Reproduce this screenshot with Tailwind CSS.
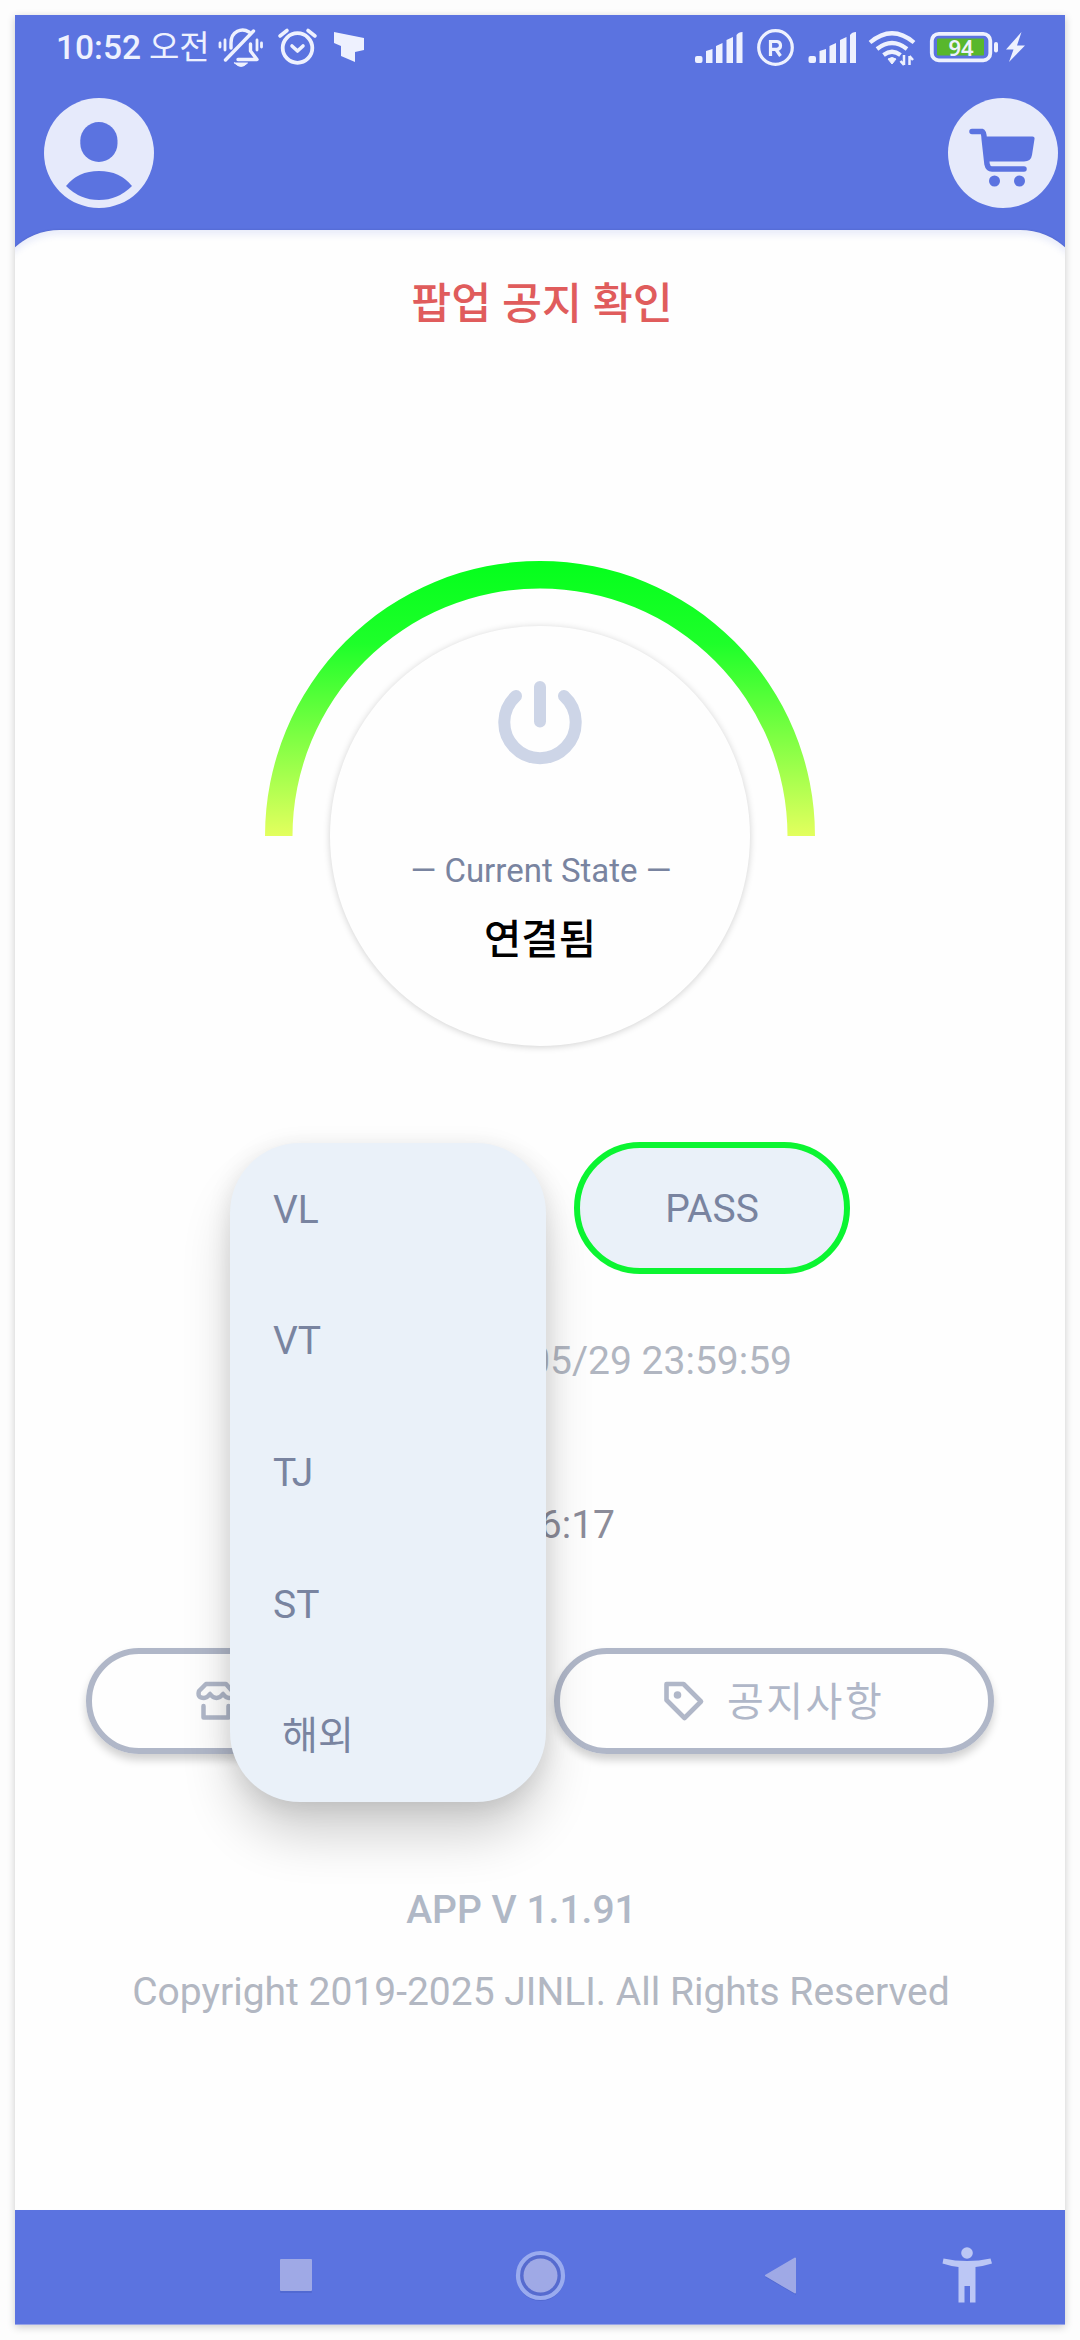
<!DOCTYPE html>
<html lang="ko">
<head>
<meta charset="utf-8">
<title>JINLI</title>
<script src="https://cdn.jsdelivr.net/npm/@tailwindcss/browser@4"></script>
</head>
<body class="bg-[#fdfdfd] w-[1080px] h-[2340px] overflow-hidden p-[15px] font-['Roboto','Noto_Sans_CJK_KR',sans-serif]">
<div class="relative w-[1050px] h-[2310px] flex flex-col bg-[#5b73e0] overflow-hidden shadow-[0_2px_8px_rgba(0,0,0,0.2)]">
  <!-- status bar -->
  <div class="h-[65px] shrink-0 flex items-center text-[#eef1fe]">
    <div class="w-[193px] ml-[41px] flex items-baseline whitespace-nowrap leading-none">
      <span class="text-[33.5px] font-medium w-[93px]">10:52</span>
      <span class="text-[33px]">오전</span>
    </div>
    <svg class="ml-[-32px] shrink-0" width="164" height="48" viewBox="216 24 164 48" fill="none" stroke="#eef1fe" stroke-width="3.4" stroke-linecap="round" stroke-linejoin="round">
      <path d="M230 48V43C230 31 241 27.500 248 32M249.500 44V51L256 59.500H237M224.500 60L252.500 31"/>
      <path d="M233.500 63H246.500Q240 70 233.500 63Z" fill="#eef1fe" stroke-width="1"/>
      <path d="M219 43V47M224 40V50M256 40V50M260.500 43V47" stroke-width="2.800"/>
      <circle cx="296.500" cy="48" r="14.800" stroke-width="3.800"/>
      <path d="M291 46L296.500 51L302 46M279 36L286 30.500M314 36L307 30.500" stroke-width="3.600"/>
      <path d="M333 32L363 38V50L354 52V62L340 56V46L333 43Z" fill="#eef1fe" stroke="none"/>
    </svg>
    <svg class="ml-auto mr-[37px] shrink-0" width="336" height="48" viewBox="692 24 336 48" fill="#eef1fe">
      <g id="bars"><rect x="695" y="56" width="7.500" height="7" rx="2"/><path d="M706 51l6.500-2v14h-6.500zM716 46l6.500-3v20h-6.500zM726.500 40l6.500-3v26h-6.500zM736.500 35q2-3 6-3v31h-6z"/></g>
      <circle cx="775.500" cy="47.500" r="16.800" fill="none" stroke="#eef1fe" stroke-width="3.200"/>
      <path d="M770.500 56V41.500H777Q780.500 42 780.500 45.500Q780.500 49 777 49.300H770.500M776 49.500L780.500 56" fill="none" stroke="#eef1fe" stroke-width="3.200"/>
      <use href="#bars" x="113.500"/>
      <g fill="none" stroke="#eef1fe" stroke-width="4.200">
        <path d="M870 42.500Q892 24 914 42.500"/><path d="M877 49Q892 37 907 49"/><path d="M883.500 55Q892 48.500 900.500 55"/>
      </g>
      <path d="M888 59Q892 56 896 59L892 64Z" stroke="#eef1fe" stroke-width="1"/>
      <path d="M904 55v10M900.500 61l3.500 4M909.500 65V56M909.500 56l3.500 4" stroke="#eef1fe" stroke-width="2.500" fill="none"/>
      <rect x="931.800" y="33.800" width="58.500" height="26.500" rx="7" fill="none" stroke="#eef1fe" stroke-width="3.800"/>
      <rect x="937" y="38.500" width="47" height="17" rx="1" fill="#58b72c"/>
      <rect x="994" y="42" width="4" height="10.500" rx="2"/>
      <path d="M1021.500 32L1006 49.500H1013.500L1009 62L1025 45.500H1017Z"/>
      <text x="961" y="55.500" text-anchor="middle" font-family="Noto Sans" font-weight="600" font-size="22">94</text>
    </svg>
  </div>
  <!-- app header -->
  <div class="h-[150px] shrink-0 flex justify-between pt-[18px] pl-[29px] pr-[7px]">
    <svg width="110" height="110" viewBox="0 0 110 110">
      <circle cx="55" cy="55" r="55" fill="#e6eafb"/>
      <rect x="36.300" y="24" width="37.200" height="40" rx="18.600" fill="#5b73e0"/>
      <path d="M22 88Q34 73 55 73Q76 73 88 88Q74 102 55 102Q36 102 22 88Z" fill="#5b73e0"/>
    </svg>
    <svg width="110" height="110" viewBox="0 0 110 110">
      <circle cx="55" cy="55" r="55" fill="#e6eafb"/>
      <path d="M24 33.500H34Q36 34 36.200 41L39 66Q40 71 44 71H76" fill="none" stroke="#5b73e0" stroke-width="5.500" stroke-linecap="round" stroke-linejoin="round"/>
      <path d="M35 38.500H84.500Q87 38.500 86.500 41L84 57Q83 63.500 76 63.500H41Z" fill="#5b73e0"/>
      <circle cx="46.500" cy="83" r="5.500" fill="#5b73e0"/><circle cx="71.500" cy="83" r="5.500" fill="#5b73e0"/>
    </svg>
  </div>
  <!-- content sheet -->
  <main class="h-[1980px] shrink-0 mx-[-22px] px-[22px] rounded-t-[67px] bg-[#fefefe] shadow-[inset_0_5px_6px_rgba(91,115,224,0.12),0_0_2px_rgba(40,50,120,0.3)] flex flex-col items-center">
    <h1 class="mt-[42px] ml-[4px] h-[66px] leading-[66px] text-[43.5px] font-medium text-[#e05c5c] whitespace-nowrap">팝업 공지 확인</h1>
    <div class="grid mt-[223px] w-[550px] h-[490px]">
      <svg class="col-start-1 row-start-1" width="550" height="276" viewBox="0 0 550 276">
        <defs><linearGradient id="arc" x1="0" y1="0" x2="0" y2="276" gradientUnits="userSpaceOnUse"><stop offset="0" stop-color="#04ff1c"/><stop offset=".3" stop-color="#1eff2a"/><stop offset="1" stop-color="#e4ff5e"/></linearGradient></defs>
        <path d="M0 275A275 275 0 0 1 550 275H522.500A247.500 247.500 0 0 0 27.500 275Z" fill="url(#arc)"/>
      </svg>
      <div class="col-start-1 row-start-1 ml-[65px] mt-[65px] w-[420px] h-[420px] rounded-full bg-[#fefefe] shadow-[0_1px_7px_rgba(0,0,0,0.18)] flex flex-col items-center">
        <svg class="mt-[54px]" width="86" height="86" viewBox="0 0 86 86" fill="none" stroke="#cdd5e7" stroke-width="12" stroke-linecap="round">
          <path d="M19 16A35.700 35.700 0 1 0 67 16M43 7V41.500"/>
        </svg>
        <div class="mt-[85px] ml-[2px] h-[40px] leading-[40px] text-[33px] text-[#7984a0] whitespace-nowrap">— Current State —</div>
        <div class="mt-[19px] h-[60px] leading-[60px] text-[40.500px] font-medium text-black whitespace-nowrap">연결됨</div>
      </div>
    </div>
    <div class="mt-[91px] w-full flex pl-[559px]">
      <div class="w-[276px] h-[132px] pt-[3px] rounded-full border-[6px] border-[#0bf531] bg-[#eaf1f9] flex items-center justify-center text-[39px] text-[#7984a0]">PASS</div>
    </div>
    <div class="mt-[63px] h-[48px] leading-[48px] w-full pr-[273px] text-right text-[39px] text-[#b1b6c1] whitespace-nowrap">2025/05/29 23:59:59</div>
    <div class="mt-[116px] h-[48px] leading-[48px] w-full pr-[450px] text-right text-[39px] text-[#8c8c99] whitespace-nowrap">6:17</div>
    <div class="mt-[99px] w-full flex gap-[28px] pl-[71px] text-[#b0b7c8]">
      <div class="w-[440px] h-[106px] rounded-full border-[6px] border-[#b0b7c8] shadow-[0_6px_8px_rgba(0,0,0,0.18)] flex items-center pl-[104px]">
        <svg width="42" height="42" viewBox="0 0 42 42" fill="none" stroke="currentColor" stroke-width="4.500" stroke-linecap="round" stroke-linejoin="round"><path d="M10 4H30L37 12Q38 18 33 18Q30 18 27 14Q24 18 20.500 18Q17 18 14 14Q11 18 8 18Q1 18 3 11ZM7.500 26V37.500H32.500V26"/></svg>
      </div>
      <div class="w-[440px] h-[106px] rounded-full border-[6px] border-[#b0b7c8] shadow-[0_6px_8px_rgba(0,0,0,0.18)] flex items-center pl-[103px]">
        <svg width="42" height="42" viewBox="0 0 42 42" fill="none" stroke="currentColor" stroke-width="4.600" stroke-linejoin="round"><path d="M3.500 4H20.500L38 21.500L21.500 38L3.500 20Z"/><circle cx="14.500" cy="15" r="3.800" fill="currentColor" stroke="none"/></svg>
        <span class="ml-[22px] pt-[4px] text-[40px] tracking-[2.5px] whitespace-nowrap">공지사항</span>
      </div>
    </div>
    <div class="mt-[132px] mr-[37px] h-[48px] leading-[48px] text-[39px] font-medium text-[#b0b8c6] whitespace-nowrap">APP V 1.1.91</div>
    <div class="mt-[34px] ml-[2px] h-[48px] leading-[48px] text-[39px] text-[#b2b7c2] whitespace-nowrap">Copyright 2019-2025 JINLI. All Rights Reserved</div>
  </main>
  <!-- navigation bar -->
  <nav class="h-[115px] shrink-0 bg-[#5b73e0] border-b border-[#97a3e6]">
    <svg width="1050" height="114" viewBox="15 2210 1050 114">
      <g fill="#3f56b8" opacity=".35"><rect x="280" y="2261" width="32" height="32" rx="1"/><circle cx="540.500" cy="2277" r="24"/><path d="M765 2277L796 2259V2295Z"/></g>
      <rect x="280" y="2259" width="32" height="32" rx="1" fill="#9fa9e6"/>
      <circle cx="540.500" cy="2275.500" r="22.500" fill="#566bcf" stroke="#9aabef" stroke-width="4.200"/>
      <circle cx="540.500" cy="2275.500" r="17" fill="#9fa9e6"/>
      <path d="M766 2275.500L795 2258.500V2292.500Z" fill="#9fa9e6" stroke="#9fa9e6" stroke-width="2" stroke-linejoin="round"/>
      <g fill="#bcc7f5"><circle cx="967" cy="2253" r="5.800"/><path d="M943.500 2258.500Q967 2263.500 990.500 2258.500L992 2263.500Q984 2266 975.500 2267V2302.500H970V2286H964.500V2302.500H958.500V2267Q950 2266 942.500 2263.500Z"/></g>
    </svg>
  </nav>
  <!-- server list -->
  <div class="absolute left-[215px] top-[1128px] w-[316px] h-[659px] rounded-[70px] bg-[#eaf1f9] shadow-[0_36px_54px_-6px_rgba(0,0,0,0.2),0_4px_24px_rgba(0,0,0,0.1)] flex flex-col pl-[43px] pt-[1px] text-[39px] text-[#7984a0]">
    <div class="h-[132px] flex items-center">VL</div>
    <div class="h-[132px] flex items-center">VT</div>
    <div class="h-[132px] flex items-center">TJ</div>
    <div class="h-[132px] flex items-center">ST</div>
    <div class="h-[131px] flex items-center pl-[9px]">해외</div>
  </div>
</div>
</body>
</html>
